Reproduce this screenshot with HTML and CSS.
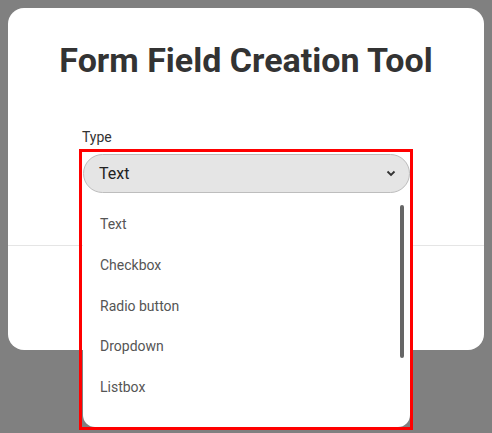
FILE: index.html
```html
<!DOCTYPE html>
<html>
<head>
<meta charset="utf-8">
<link rel="stylesheet" href="styles.css">
</head>
<body>
<div class="page">
  <div class="card">
    <h1 class="title">Form Field Creation Tool</h1>
    <div class="form">
      <div class="label">Type</div>
      <div class="field">
        <div class="combo">
          <div class="select">
            <span class="value">Text</span>
            <svg class="chev" width="10" height="7" viewBox="0 0 10 7"><polyline points="1.5,1.5 5,5 8.5,1.5" fill="none" stroke="#333" stroke-width="1.8"/></svg>
          </div>
          <ul class="list">
            <li>Text</li>
            <li>Checkbox</li>
            <li>Radio button</li>
            <li>Dropdown</li>
            <li>Listbox</li>
          </ul>
          <div class="scroll"></div>
        </div>
      </div>
    </div>
    <div class="divider"></div>
  </div>
</div>
</body>
</html>
```
FILE: styles.css
```css
html, body { margin: 0; padding: 0; }
body {
  background: #808080;
  font-family: Roboto, "Liberation Sans", sans-serif;
  width: 492px;
  height: 433px;
  overflow: hidden;
}
.page { padding: 8px; }
.card {
  background: #fff;
  border-radius: 16px;
  height: 342px;
  display: flex;
  flex-direction: column;
}
.title {
  margin: 32px 0 0;
  font-size: 34px;
  line-height: 40px;
  font-weight: 700;
  color: #333;
  text-align: center;
}
.form {
  margin-top: 49px;
  padding-left: 74px;
}
.label {
  font-size: 14px;
  line-height: 16px;
  font-weight: 400;
  color: #333;
}
.field {
  margin-top: 7px;
  width: 328px;
  height: 41px;
  position: relative;
}
.combo {
  position: absolute;
  left: 0;
  top: 0;
  width: 328px;
  height: 275px;
  outline: 3px solid #ff0000;
}
.select {
  margin: 2px 0 0 1px;
  box-sizing: border-box;
  height: 39px;
  width: 327px;
  background: #e5e5e5;
  border: 1px solid #bdbdbd;
  border-radius: 20px;
  display: flex;
  align-items: center;
  justify-content: space-between;
  padding: 0 13px 0 15px;
}
.value { font-size: 16px; color: #222; }
.chev { display: block; }
.list {
  list-style: none;
  margin: 0 0 0 1px;
  padding: 11px 0 0;
  box-sizing: border-box;
  width: 327px;
  height: 234px;
  background: #fff;
  border-radius: 0 0 12px 12px;
  overflow: hidden;
}
.list li {
  height: 40.75px;
  line-height: 40.75px;
  padding-left: 17px;
  font-size: 14px;
  color: #555;
}
.scroll {
  position: absolute;
  left: 318px;
  top: 53px;
  width: 4px;
  height: 153px;
  border-radius: 2px;
  background: #666;
}
.divider {
  margin-top: 52px;
  height: 1px;
  background: #e5e5e5;
}
```
